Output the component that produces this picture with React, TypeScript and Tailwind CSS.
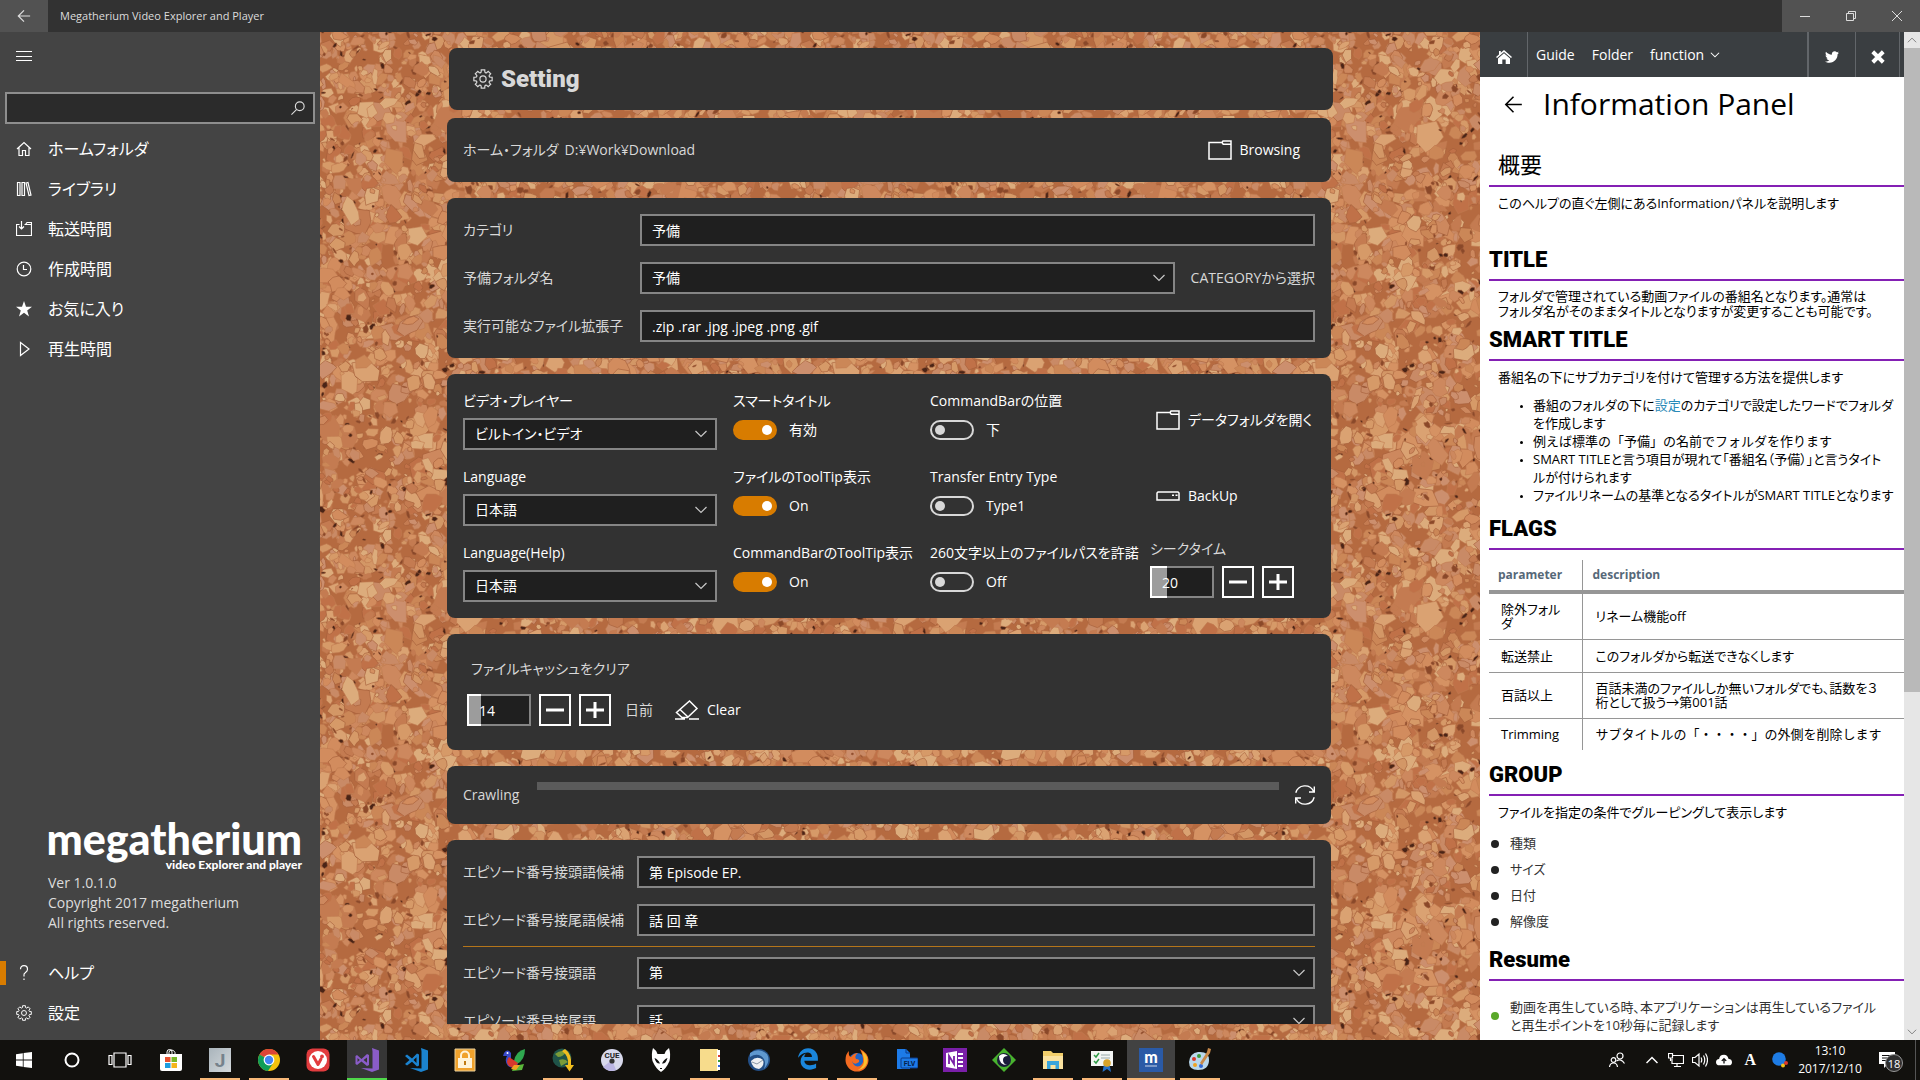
import React from "react";
import { FaTwitter, FaEdgeLegacy } from "react-icons/fa";

/* ---------- cork board ---------- */

const TILE = 480;

function makeCork() {
  let seed = 20171210;
  const rnd = () => {
    seed = (seed * 1664525 + 1013904223) % 4294967296;
    return seed / 4294967296;
  };
  const tones = ["#d39766", "#cb8757", "#daa272", "#c47b51", "#d28c5e", "#dcac7c", "#cd885e", "#c07148", "#d69a68", "#cc8f6e", "#d59263", "#c98a66"];
  const chips: { d: string; fill: string; edge: string }[] = [];
  const add = (x: number, y: number, r: number, fill: string, edge: string, flat = 0.5) => {
    const n = 5 + Math.floor(rnd() * 4);
    const turn = rnd() * 6.28;
    const squash = flat + rnd() * (1 - flat);
    const pts: [number, number][] = [];
    for (let i = 0; i < n; i++) {
      const a = (i / n) * 6.283 + rnd() * 0.5;
      const k = r * (0.65 + rnd() * 0.5);
      const px = Math.cos(a) * k;
      const py = Math.sin(a) * k * squash;
      pts.push([px * Math.cos(turn) - py * Math.sin(turn), px * Math.sin(turn) + py * Math.cos(turn)]);
    }
    for (const ox of [-TILE, 0, TILE]) {
      for (const oy of [-TILE, 0, TILE]) {
        const cx = x + ox;
        const cy = y + oy;
        if (cx < -30 || cx > TILE + 30 || cy < -30 || cy > TILE + 30) continue;
        chips.push({ d: "M" + pts.map((p) => `${(cx + p[0]).toFixed(1)} ${(cy + p[1]).toFixed(1)}`).join("L") + "Z", fill, edge });
      }
    }
  };
  for (let i = 0; i < 4200; i++) {
    const big = rnd();
    const r = big > 0.96 ? 12 + rnd() * 5 : big > 0.6 ? 6 + rnd() * 5 : 2 + rnd() * 5;
    add(rnd() * TILE, rnd() * TILE, r, tones[Math.floor(rnd() * tones.length)], rnd() > 0.65 ? "#a35a35" : "#c0794d");
    if (i % 5 === 0) add(rnd() * TILE, rnd() * TILE, 1 + rnd() * 3.5, rnd() > 0.5 ? "#4a2416" : "#8a4829", "#9a5532", 0.2);
  }
  return chips;
}

const cork = makeCork();

function CorkBoard() {
  return (
    <svg className="absolute inset-0 h-full w-full" aria-hidden="true">
      <defs>
        <pattern id="cork" width={TILE} height={TILE} patternUnits="userSpaceOnUse">
          <rect width={TILE} height={TILE} fill="#b56a40" />
          {cork.map((c, i) => (
            <path key={i} d={c.d} fill={c.fill} stroke={c.edge} strokeWidth="0.6" />
          ))}
        </pattern>
      </defs>
      <rect width="100%" height="100%" fill="url(#cork)" />
    </svg>
  );
}

/* ---------- line icons ---------- */

type IconProps = { className?: string; children: React.ReactNode; box?: string; w?: number };

function Line({ className = "size-4", children, box = "0 0 16 16", w = 1 }: IconProps) {
  return (
    <svg viewBox={box} className={className} fill="none" stroke="currentColor" strokeWidth={w} aria-hidden="true">
      {children}
    </svg>
  );
}

const gearPath = (() => {
  let d = "";
  for (let i = 0; i < 8; i++) {
    const a = (i * Math.PI) / 4;
    const p = (r: number, t: number) => `${(10 + r * Math.cos(a + t)).toFixed(2)} ${(10 + r * Math.sin(a + t)).toFixed(2)}`;
    d += `${i ? "L" : "M"}${p(7.2, -0.26)}L${p(9.3, -0.19)}L${p(9.3, 0.19)}L${p(7.2, 0.26)}Q${p(6.3, 0.3927)} ${p(7.2, 0.52)}`;
  }
  return d + "Z";
})();

function Gear({ className = "size-5" }: { className?: string }) {
  return (
    <Line className={className} box="0 0 20 20" w={1.2}>
      <path d={gearPath} />
      <circle cx="10" cy="10" r="3.1" />
    </Line>
  );
}

function BackArrow({ className = "size-4", w = 1 }: { className?: string; w?: number }) {
  return (
    <Line className={className} w={w}>
      <path d="M15 8H1.5M8 1.5L1.5 8L8 14.5" />
    </Line>
  );
}

function Chevron({ className = "h-2 w-3", w = 1.2 }: { className?: string; w?: number }) {
  return (
    <Line className={className} box="0 0 12 8" w={w}>
      <path d="M.5 1L6 6.5L11.5 1" />
    </Line>
  );
}

function FolderIcon() {
  return (
    <Line className="h-5 w-6" box="0 0 24 20" w={1.5}>
      <path d="M1 2.5H14L15 1H23V19H1ZM14 2.5L15.2 4.2H23" />
    </Line>
  );
}

/* ---------- shared controls ---------- */

const field = "h-8 w-full min-w-0 rounded-none border-2 border-[#858585] bg-[#1f1f1f] px-2.5 text-sm text-white outline-none";

function TextBox({ id, value }: { id: string; value: string }) {
  return <input id={id} type="text" defaultValue={value} className={field} />;
}

function Select({ id, value }: { id: string; value: string }) {
  return (
    <div className="grid w-full min-w-0 items-center">
      <select id={id} defaultValue={value} className={`${field} col-start-1 row-start-1 appearance-none`}>
        <option>{value}</option>
      </select>
      <Chevron className="pointer-events-none col-start-1 row-start-1 mr-2.5 h-2 w-3 justify-self-end text-[#c8c8c8]" />
    </div>
  );
}

function Toggle({ id, label, text, on }: { id: string; label: string; text: string; on?: boolean }) {
  return (
    <div className="flex h-[60px] flex-col gap-2 whitespace-nowrap text-white">
      <label htmlFor={id} className="h-5 leading-[22px]">{label}</label>
      <div className="flex items-center gap-3 pt-0.5">
        <input
          id={id}
          type="checkbox"
          role="switch"
          defaultChecked={on}
          className="flex h-5 w-11 shrink-0 appearance-none items-center rounded-full border-2 border-[#d8d8d8] px-[3px] before:size-2.5 before:rounded-full before:bg-[#d8d8d8] checked:justify-end checked:border-[#d87c00] checked:bg-[#d87c00] checked:before:bg-white"
        />
        <span className="leading-5">{text}</span>
      </div>
    </div>
  );
}

function LabeledSelect({ id, label, value }: { id: string; label: string; value: string }) {
  return (
    <div className="flex flex-col gap-2 pr-4 text-white">
      <label htmlFor={id} className="h-5 leading-[22px]">{label}</label>
      <Select id={id} value={value} />
    </div>
  );
}

function Stepper({ id, value, fill }: { id: string; value: string; fill: string }) {
  const btn = "flex size-8 items-center justify-center border-2 border-white text-white";
  return (
    <div className="flex gap-2">
      <input id={id} type="text" defaultValue={value} className={`h-8 w-16 rounded-none border-2 border-transparent px-2.5 text-sm text-white outline-none ${fill}`} />
      <button type="button" aria-label="減らす" className={btn}>
        <Line className="size-5" box="0 0 20 20" w={3}><path d="M1 10H19" /></Line>
      </button>
      <button type="button" aria-label="増やす" className={btn}>
        <Line className="size-5" box="0 0 20 20" w={3}><path d="M1 10H19M10 2V18" /></Line>
      </button>
    </div>
  );
}

const card = "rounded-lg bg-[#323232] px-4";

/* ---------- sidebar ---------- */

const nav = [
  { text: "ホームフォルダ", icon: <Line w={1.2}><path d="M1 8L8 1.5L15 8M3 6.5V14.5H6.5V9.5H9.5V14.5H13V6.5" /></Line> },
  { text: "ライブラリ", icon: <Line w={1.2}><path d="M1.5 1.5H4V14.5H1.5ZM6 1.5H8.5V14.5H6ZM10 2L12 1.5L15 14L13 14.5Z" /></Line> },
  { text: "転送時間", icon: <Line w={1.2}><path d="M3.5 3.5H.5V14.5H15.5V1.5H11L9.5 3.5H8.5M10 3.5H15.5M5.5 0V8M3 5.5L5.5 8L8 5.5" /></Line> },
  { text: "作成時間", icon: <Line w={1.2}><circle cx="8" cy="8" r="6.8" /><path d="M7.5 4V8.5H11" /></Line> },
  { text: "お気に入り", icon: <svg viewBox="0 0 16 16" className="size-4" fill="currentColor"><path d="M8 0L10 5.8H16L11.2 9.4L13 15.5L8 11.8L3 15.5L4.8 9.4L0 5.8H6Z" /></svg> },
  { text: "再生時間", icon: <Line w={1.2}><path d="M4.5 1.5L13 8L4.5 14.5Z" /></Line> },
];

function NavItem({ icon, text, active }: { icon: React.ReactNode; text: string; active?: boolean }) {
  return (
    <button type="button" className="flex h-10 w-full items-center text-left text-base text-white">
      <span className={active ? "h-6 w-1.5 bg-[#d87c00]" : "h-6 w-1.5"} />
      <span className="flex w-[42px] items-center pl-2.5">{icon}</span>
      {text}
    </button>
  );
}

function Sidebar() {
  return (
    <nav className="flex w-80 shrink-0 flex-col bg-[#444] pb-[7px]">
      <button type="button" aria-label="メニュー" className="flex h-12 w-12 items-center justify-center text-white">
        <Line><path d="M0 3.5H16M0 8.5H16M0 12.5H16" /></Line>
      </button>
      <form className="mx-[5px] mt-3 mb-[5px] flex h-8 items-center border-2 border-[#8e8e8e] bg-[#2b2b2b] pr-2 text-[#ddd]">
        <input type="search" aria-label="検索" className="h-full min-w-0 flex-1 bg-transparent px-2 text-sm outline-none" />
        <button type="button" aria-label="検索"><Line className="size-3.5" w={1.3}><circle cx="10" cy="6" r="5" /><path d="M6.500 9.500L.5 15.500" /></Line></button>
      </form>
      {nav.map((n) => <NavItem key={n.text} {...n} />)}
      <div className="mt-auto mb-5 pl-12 text-sm leading-5 text-[#ddd]">
        <div className="flex w-[254px] flex-col items-end font-['Lato'] font-black whitespace-nowrap text-white">
          <div className="text-[43px] leading-9">megatherium</div>
          <div className="text-xs leading-4">video Explorer and player</div>
        </div>
        <p>Ver 1.0.1.0</p>
        <p>Copyright 2017 megatherium</p>
        <p>All rights reserved.</p>
      </div>
      <NavItem active text="ヘルプ" icon={<Line w={1.2}><path d="M4.500 4.200Q4.500 .7 8 .7T11.500 4.200Q11.500 6 9.500 7.500T8 10V11.500M8 13.500V15" /></Line>} />
      <NavItem text="設定" icon={<Gear className="size-4" />} />
    </nav>
  );
}

/* ---------- settings ---------- */

function Settings() {
  return (
    <main className="relative flex min-w-0 flex-1 flex-col overflow-hidden pt-4 pb-4 text-sm text-[#d8d8d8]">
      <CorkBoard />
      <div className="relative pr-[18px]">
        <header className="mx-auto flex h-[62px] w-[884px] max-w-full items-center gap-2 rounded-lg bg-[#323232] pl-6">
          <Gear />
          <h1 className="font-['Roboto'] text-2xl leading-8 font-black">Setting</h1>
        </header>
      </div>
      <div className="relative mt-2 min-h-0 flex-1 overflow-hidden pr-[22px]">
        <div className="mx-auto flex w-[884px] max-w-full flex-col gap-4">
          <section className={`${card} flex h-16 items-center gap-1.5`}>
            <span>ホーム・フォルダ</span>
            <span>D:¥Work¥Download</span>
            <button type="button" className="mr-[15px] ml-auto flex items-center gap-2 text-white"><FolderIcon />Browsing</button>
          </section>

          <section className={`${card} grid grid-cols-[177px_1fr_auto] items-center gap-y-4 py-4`}>
            <label htmlFor="category">カテゴリ</label>
            <div className="col-span-2"><TextBox id="category" value="予備" /></div>
            <label htmlFor="spare">予備フォルダ名</label>
            <Select id="spare" value="予備" />
            <span className="pl-4">CATEGORYから選択</span>
            <label htmlFor="ext" className="whitespace-nowrap">実行可能なファイル拡張子</label>
            <div className="col-span-2"><TextBox id="ext" value=".zip .rar .jpg .jpeg .png .gif" /></div>
          </section>

          <section className={`${card} grid grid-cols-[270px_197px_220px_1fr] gap-y-4 py-4`}>
            <LabeledSelect id="player" label="ビデオ・プレイヤー" value="ビルトイン・ビデオ" />
            <Toggle id="smart" label="スマートタイトル" text="有効" on />
            <Toggle id="bar" label="CommandBarの位置" text="下" />
            <button type="button" className="flex items-center gap-2 pl-1.5 whitespace-nowrap text-white"><FolderIcon />データフォルダを開く</button>

            <LabeledSelect id="lang" label="Language" value="日本語" />
            <Toggle id="filetip" label="ファイルのToolTip表示" text="On" on />
            <Toggle id="entry" label="Transfer Entry Type" text="Type1" />
            <button type="button" className="flex items-center gap-2 pl-1.5 text-white">
              <Line className="h-2.5 w-6" box="0 0 24 10" w={1.5}><path d="M2 1H22L23 2V9H1V2ZM16 4.200H18M19.500 4.200H21.500" /></Line>
              BackUp
            </button>

            <LabeledSelect id="helplang" label="Language(Help)" value="日本語" />
            <Toggle id="bartip" label="CommandBarのToolTip表示" text="On" on />
            <Toggle id="longpath" label="260文字以上のファイルパスを許諾" text="Off" />
            <div className="flex flex-col gap-2">
              <label htmlFor="seek" className="h-4 leading-[14px]">シークタイム</label>
              <Stepper id="seek" value="20" fill="[background:linear-gradient(to_right,#9c9c9c_15px,#1f1f1f_15px)_padding-box,linear-gradient(to_right,#fff_17px,#858585_17px)_border-box]" />
            </div>
          </section>

          <section className={`${card} flex flex-col gap-4 py-6`}>
            <label htmlFor="days" className="h-5 pl-2 leading-[22px]">ファイルキャッシュをクリア</label>
            <div className="flex items-center pl-1">
              <Stepper id="days" value="14" fill="[background:linear-gradient(to_right,#9c9c9c_12px,#1f1f1f_12px)_padding-box,linear-gradient(to_right,#fff_14px,#858585_14px)_border-box]" />
              <span className="pl-3.5">日前</span>
              <button type="button" className="ml-[22px] flex items-center gap-2 text-white">
                <Line className="h-5 w-6" box="0 0 24 20" w={1.5}><path d="M14.500 1L22 8.500L12.500 17.500H7L1.500 12.500ZM5 9.500L13 17M0 19H10M14 19H24" /></Line>
                Clear
              </button>
            </div>
          </section>

          <section className={`${card} flex h-[58px] items-center gap-4`}>
            <span className="w-[58px]">Crawling</span>
            <div role="progressbar" aria-label="Crawling" className="mt-4 h-2 flex-1 self-start bg-[#5b5b5b]" />
            <button type="button" aria-label="更新" className="text-white">
              <Line className="size-5" box="0 0 20 20" w={1.4}><path d="M.8 7.800A9.500 9.500 0 0 1 18.500 6.200M19.300 1.500V7H14M19.200 12.200A9.500 9.500 0 0 1 1.500 13.800M.7 18.500V13H6" /></Line>
            </button>
          </section>

          <section className={`${card} flex shrink-0 flex-col py-4`}>
            <div className="grid grid-cols-[174px_1fr] items-center gap-y-4">
              <label htmlFor="pre-c" className="whitespace-nowrap">エピソード番号接頭語候補</label>
              <TextBox id="pre-c" value="第 Episode EP." />
              <label htmlFor="suf-c" className="whitespace-nowrap">エピソード番号接尾語候補</label>
              <TextBox id="suf-c" value="話 回 章" />
            </div>
            <hr className="my-2.5 border-[#b5751a]" />
            <div className="grid grid-cols-[174px_1fr] items-center gap-y-4">
              <label htmlFor="pre">エピソード番号接頭語</label>
              <Select id="pre" value="第" />
              <label htmlFor="suf">エピソード番号接尾語</label>
              <Select id="suf" value="話" />
            </div>
          </section>
        </div>
      </div>
    </main>
  );
}

/* ---------- help panel ---------- */

function Heading({ children }: { children: string }) {
  return (
    <h2 className="ml-[9px] h-[42px] border-b-2 border-[#8420b4] font-['Roboto'] text-[22px] leading-[42px] font-black text-black">{children}</h2>
  );
}

const flags: [string, React.ReactNode, string][] = [
  ["除外フォルダ", "リネーム機能off", "h-[47px]"],
  ["転送禁止", "このフォルダから転送できなくします", "h-[33px]"],
  ["百話以上", <>百話未満のファイルしか無いフォルダでも、話数を３<br />桁として扱う→第001話</>, "h-[46px]"],
  ["Trimming", <span className="[font-feature-settings:normal]">サブタイトルの「・・・・」の外側を削除します</span>, "h-8"],
];

function HelpPanel() {
  const cell = "border-[#969696]";
  return (
    <aside className="flex w-[440px] shrink-0 bg-white text-[13px] text-black">
      <div className="min-w-0 flex-1 overflow-hidden whitespace-nowrap">
        <div className="flex h-[45px] items-stretch bg-[#3a3e41] text-sm text-white">
          <a href="#home" aria-label="ホーム" className="flex w-12 items-center justify-center border-r border-[#62666a]">
            <svg viewBox="0 0 16 14" className="mt-1 h-3.5 w-4" fill="currentColor"><path d="M8 0L16 7L15 8L8 2L1 8L0 7L3 4.400V1H4.800V2.800Z" /><path d="M8 3.300L14 8.500V14H9.700V9.500H6.300V14H2V8.500Z" /></svg>
          </a>
          <a href="#guide" className="flex items-center pl-2">Guide</a>
          <a href="#folder" className="flex items-center pl-[17px]">Folder</a>
          <button type="button" className="flex items-center gap-1.5 pl-[17px]">function<Chevron className="h-1.5 w-2.5" w={1.4} /></button>
          <a href="#twitter" aria-label="Twitter" className="ml-auto flex w-[49px] items-center justify-center border-r border-l-2 border-[#62666a] pt-1"><FaTwitter className="size-3.5" /></a>
          <button type="button" aria-label="閉じる" className="mr-1 flex w-11 items-center justify-center border-r border-[#62666a] pt-1">
            <Line className="size-3.5" w={4.5}><path d="M2 2L14 14M14 2L2 14" /></Line>
          </button>
        </div>
        <div className="flex h-[66px] items-center pb-3 pl-6">
          <a href="#back" aria-label="戻る"><BackArrow className="size-[19px]" w={1.3} /></a>
          <h1 className="pl-5 text-[30px] leading-10">Information Panel</h1>
        </div>
        <h2 className="ml-[9px] h-11 border-b-2 border-[#8420b4] pl-[9px] text-[22px] leading-[42px]">概要</h2>
        <p className="h-[52px] pl-[18px] leading-8">このヘルプの直ぐ左側にあるInformationパネルを説明します</p>
        <Heading>TITLE</Heading>
        <p className="h-[38px] pt-2 pl-[18px] leading-[15px]">フォルダで管理されている動画ファイルの番組名となります。通常は<br />フォルダ名がそのままタイトルとなりますが変更することも可能です。</p>
        <Heading>SMART TITLE</Heading>
        <p className="h-[35px] pl-[18px] leading-8">番組名の下にサブカテゴリを付けて管理する方法を提供します</p>
        <ul className="h-28 list-disc pl-[53px] leading-[18px] marker:text-[8px]">
          <li>番組のフォルダの下に<a href="#setting" className="text-[#2a8ab8]">設定</a>のカテゴリで設定したワードでフォルダ<br />を作成します</li>
          <li className="[font-feature-settings:normal]">例えば標準の「予備」の名前でフォルダを作ります</li>
          <li>SMART TITLEと言う項目が現れて「番組名（予備）」と言うタイト<br />ルが付けられます</li>
          <li>ファイルリネームの基準となるタイトルがSMART TITLEとなります</li>
        </ul>
        <Heading>FLAGS</Heading>
        <table className="mt-2.5 ml-[9px] w-[415px] table-fixed border-collapse text-left leading-[14px] whitespace-normal">
          <thead>
            <tr className="h-8 border-b-4 border-[#969696] text-xs text-[#566878]">
              <th className={`w-[93px] border-r pl-[9px] ${cell}`}>parameter</th>
              <th className="pl-2.5">description</th>
            </tr>
          </thead>
          <tbody>
            {flags.map(([a, b, h]) => (
              <tr key={a} className={`border-b border-[#969696] last:border-b-0 ${h}`}>
                <td className={`border-r pr-3 pl-3 ${cell}`}>{a}</td>
                <td className="pl-[13px] whitespace-nowrap">{b}</td>
              </tr>
            ))}
          </tbody>
        </table>
        <div className="pt-1"><Heading>GROUP</Heading></div>
        <p className="h-[35px] pl-[18px] leading-8">ファイルを指定の条件でグルーピングして表示します</p>
        <ul className="mb-1 text-[#333]">
          {["種類", "サイズ", "日付", "解像度"].map((t) => (
            <li key={t} className="flex h-[26px] items-center gap-[11px] pl-[11px]"><span className="size-2 rounded-full bg-[#222]" />{t}</li>
          ))}
        </ul>
        <Heading>Resume</Heading>
        <ul className="pt-[17px] text-[#333]">
          <li className="flex items-center gap-[11px] pl-[11px] leading-[18px]">
            <span className="size-2 rounded-full bg-[#5aa82a]" />
            <span>動画を再生している時、本アプリケーションは再生しているファイル<br />と再生ポイントを10秒毎に記録します</span>
          </li>
        </ul>
      </div>
      <div className="flex w-4 flex-col bg-[#e6e6e6] text-[#777]">
        <button type="button" aria-label="上へ" className="flex h-4 items-center justify-center"><Chevron className="h-1.5 w-2.5 rotate-180" /></button>
        <div className="flex-1"><div className="h-[66%] bg-[#b9b9b9]" /></div>
        <button type="button" aria-label="下へ" className="flex h-4 items-center justify-center"><Chevron className="h-1.5 w-2.5" /></button>
      </div>
    </aside>
  );
}

/* ---------- taskbar ---------- */

function Art({ children }: { children: React.ReactNode }) {
  return <svg viewBox="0 0 24 24" className="size-6" aria-hidden="true">{children}</svg>;
}

type App = { name: string; art: React.ReactNode; open?: boolean; active?: boolean; green?: boolean };

const apps: App[] = [
  { name: "Store", art: <Art><path d="M8 6V4Q8 1.5 10.5 1.5T13 4V6M10 6V4.5Q10 2 12.5 2T16 4.5V6" fill="none" stroke="#fff" /><path d="M1 6H23V21Q23 23 21 23H3Q1 23 1 21Z" fill="#fff" /><path d="M6 9H11.5V14H6Z" fill="#e8502f" /><path d="M12.5 9H18V14H12.5Z" fill="#78b828" /><path d="M6 15H11.5V20H6Z" fill="#1c9de0" /><path d="M12.5 15H18V20H12.5Z" fill="#f5b51c" /></Art> },
  { name: "J", open: true, art: <Art><defs><linearGradient id="jg" x1="0" y1="0" x2="1" y2="1"><stop stopColor="#a9b4bb" /><stop offset="1" stopColor="#d4d9dc" /></linearGradient></defs><path d="M1 0H23V24H1Z" fill="url(#jg)" /><text x="12" y="19" textAnchor="middle" fontSize="19" fontWeight="700" fontFamily="Roboto" fill="#76828b">J</text></Art> },
  { name: "Chrome", open: true, art: <Art><circle cx="12" cy="12" r="11" fill="#f4c20d" /><path d="M12 12L2.5 6.5A11 11 0 0 1 21.6 6.6H12Z" fill="#db4437" /><path d="M12 12L2.5 6.5A11 11 0 0 0 11 23L16.5 14.5Z" fill="#0f9d58" /><circle cx="12" cy="12" r="5.4" fill="#fff" /><circle cx="12" cy="12" r="4.2" fill="#4285f4" /></Art> },
  { name: "Vivaldi", art: <Art><rect x=".5" y=".5" width="23" height="23" rx="6" fill="#e23c3e" /><circle cx="12" cy="12" r="9" fill="#fff" /><path d="M7.5 8.5L12 16.5L15 11" fill="none" stroke="#e23c3e" strokeWidth="3" strokeLinecap="round" strokeLinejoin="round" /><circle cx="16" cy="8.4" r="1.9" fill="#e23c3e" /></Art> },
  { name: "Visual Studio", green: true, active: true, art: <Art><path d="M17 0L24 2.5V21.5L17 24L6 20L17.500 20.500V3.500L17 0Z" fill="#8a5cc8" /><path d="M2 7L6.5 11L12 6L14 7V17L12 18L6.5 13.5L2 17L.5 16V8ZM2.5 10V14L4.8 12ZM12 9.5L8.5 12L12 14.7Z" fill="#8a5cc8" fillRule="evenodd" /></Art> },
  { name: "Visual Studio Code", art: <Art><path d="M17 0L24 2.5V21.5L17 24L6 20L17.500 20.500V3.500L17 0Z" fill="#1b83cf" /><path d="M1 8L3 6.500L8 10.500L13 5.500L15 6.500V17.500L13 18.500L8 13.800L3 17.500L1 16L5.500 12ZM12.500 9.200L9.500 12L12.500 15Z" fill="#1b83cf" fillRule="evenodd" /></Art> },
  { name: "Lock", art: <Art><path d="M2 1H22V23H2Z" fill="#f0a22c" stroke="#e8cf9a" /><path d="M5 10H19V20H5Z" fill="#fff3d8" /><path d="M8 11V7.5A4 4 0 0 1 16 7.5V11" fill="none" stroke="#fff3d8" strokeWidth="2" /><path d="M11 13H13V17H11Z" fill="#c07a14" /></Art> },
  { name: "Bird", art: <Art><path d="M12 13Q14 3 23 1Q23 12 15 16Z" fill="#2fa84f" /><path d="M2 5Q5 0 9 5V11L16 16Q12 22 6 18Q2 13 5 8L1 8Z" fill="#3949c8" /><path d="M7 9L16 15Q12 22 7 18Q3 14 7 9Z" fill="#d8382e" /><path d="M12 18L22 16L20 22L10 23Z" fill="#5ab83a" /><path d="M12 17L18 17L14 22L9 21Z" fill="#f0a322" /><circle cx="5.5" cy="5" r="1" fill="#fff" /></Art> },
  { name: "Globe", open: true, art: <Art><circle cx="11" cy="10" r="9.5" fill="#1f5348" /><path d="M4 6Q10 1 15 4Q12 9 7 9ZM8 12Q14 10 17 14L10 18Z" fill="#7a9b38" /><path d="M14 1Q21 6 20 17H23L18.5 23.5L14 17H17Q18 8 11 3Z" fill="#f0bd1e" /></Art> },
  { name: "CUE", art: <Art><circle cx="12" cy="12" r="11" fill="#d8d9ec" /><path d="M12 12L3 19A11 11 0 0 0 16 22Z" fill="#bcb6e4" /><circle cx="12" cy="13" r="2.6" fill="#333" /><text x="12" y="10" textAnchor="middle" fontSize="8" fontWeight="700" fontFamily="Roboto" fill="#222">CUE</text></Art> },
  { name: "foobar2000", art: <Art><path d="M4 0Q7 2 8.500 6H15.500Q17 2 20 0Q22 6 20.500 13Q17 21 12 24Q7 21 3.500 13Q2 6 4 0Z" fill="#fff" /><path d="M5.500 10Q9 11 11 15.500Q7 16 5.500 10ZM18.500 10Q15 11 13 15.500Q17 16 18.500 10Z" fill="#111" /><path d="M11 20H13V21H11Z" fill="#111" /></Art> },
  { name: "Notes", open: true, art: <Art><path d="M2 1H20V23H2Z" fill="#f7dc8c" /><path d="M19 2H22V22H19Z" fill="#fff" /><path d="M20 7H22V9H20Z" fill="#d8382e" /><path d="M20 12H22V14H20Z" fill="#3a9b3a" /><path d="M20 17H22V19H20Z" fill="#3068d8" /></Art> },
  { name: "Thunderbird", art: <Art><circle cx="12" cy="12" r="11" fill="#234f86" /><path d="M3 5Q12 -1 20 6Q24 13 17 21Q20 12 14 8Q9 5 3 9Z" fill="#5f98cf" /><path d="M4 13Q10 7 16 12Q18 18 12 21Q5 20 4 13Z" fill="#eef0f2" /><path d="M5 14L10 16L16 12" fill="none" stroke="#8a98a6" /></Art> },
  { name: "Edge", open: true, art: <FaEdgeLegacy className="size-[22px] text-[#1a86dc]" /> },
  { name: "Firefox", open: true, art: <Art><circle cx="12" cy="13" r="8" fill="#1d65c8" /><path d="M4 3Q3 8 6 9Q9 5 13 5Q9 8 11 11Q15 11 14 14Q9 18 7 13Q9 20 15 18Q20 15 17 6L15 1Q23 5 23.500 12A11.500 11.500 0 0 1 .5 12Q.5 6 4 3Z" fill="#f36b21" /><path d="M17 3Q24 8 22 15Q20 21 13 22Q20 18 19 11Z" fill="#fbc02d" /></Art> },
  { name: "FLV", art: <Art><path d="M3 1H12L16 5V21H3Z" fill="#1d7be8" /><path d="M12 1V5H16" fill="none" stroke="#0c3c88" /><rect x="7" y="10" width="17" height="10" rx="1" fill="#1d7be8" stroke="#0c3c88" /><text x="15.500" y="18" textAnchor="middle" fontSize="7" fontWeight="700" fontFamily="Roboto" fill="#071f4a">FLV</text></Art> },
  { name: "OneNote", art: <Art><path d="M0 0H24V24H0Z" fill="#7a1fa8" /><path d="M3 5L14 3V21L3 19Z" fill="#fff" /><path d="M15 5H20V7H15ZM15 9H20V11H15ZM15 13H20V15H15ZM15 17H20V19H15Z" fill="#fff" /><path d="M6 16V8L11 16V8" fill="none" stroke="#7a1fa8" strokeWidth="1.800" /></Art> },
  { name: "Browser", art: <Art><path d="M12 0L24 12L12 24L0 12Z" fill="#49b32e" /><circle cx="12" cy="12" r="7" fill="#1a1d3a" /><path d="M7 8Q11 4 16 8Q11 8 11 12T15 17Q7 17 7 8Z" fill="#fff" /></Art> },
  { name: "Explorer", open: true, art: <Art><path d="M2 3H10L12 5H22V21H2Z" fill="#f2cf6b" /><path d="M2 8H22V21H2Z" fill="#fbe3a0" /><path d="M6 21V13H18V21H14.500V17H9.500V21Z" fill="#3aa5dc" /></Art> },
  { name: "Certificate", open: true, art: <Art><path d="M1 3H23V18H1Z" fill="#f4f6f4" /><path d="M4 7L6 9L9 5M4 13L6 15L9 11" fill="none" stroke="#2f9b46" strokeWidth="1.500" /><path d="M11 7H20M11 10H20" stroke="#9aa" /><path d="M14 16L12.500 24L17 21L21 24L19.500 16Z" fill="#2470c8" /><circle cx="17" cy="15" r="3.800" fill="#d8a32a" /></Art> },
  { name: "Megatherium", open: true, active: true, art: <Art><path d="M0 0H24V24H0Z" fill="#2a5aa6" /><text x="12" y="15" textAnchor="middle" fontSize="16" fontWeight="900" fontFamily="Lato" fill="#fff">m</text><path d="M6 18H18" stroke="#c8d4ea" /></Art> },
  { name: "Paint", open: true, art: <Art><path d="M10 4Q21 3 21 12Q21 22 10 22Q1 22 1 14Q2 5 10 4Z" fill="#b9d8ec" /><circle cx="6" cy="11" r="2" fill="#d8382e" /><circle cx="11" cy="8" r="2" fill="#3a9b3a" /><circle cx="7" cy="17" r="2" fill="#f0a322" /><circle cx="13" cy="18" r="2" fill="#3068d8" /><path d="M12 15L19 4L20 0L23 1L22 5L14 17Z" fill="#c98a4a" /></Art> },
];

function Taskbar() {
  const sys = "flex w-12 items-center justify-center";
  return (
    <footer className="flex h-10 shrink-0 bg-[#12110e] text-white">
      <button type="button" aria-label="スタート" className={sys}><svg viewBox="0 0 16 16" className="size-4" fill="#fff"><path d="M0 2.200L6.800 1.200V7.600H0ZM7.600 1.100L16 0V7.600H7.600ZM0 8.400H6.800V14.800L0 13.800ZM7.600 8.400H16V16L7.600 14.900Z" /></svg></button>
      <button type="button" aria-label="Cortana" className={sys}><Line w={2}><circle cx="8" cy="8" r="6.500" /></Line></button>
      <button type="button" aria-label="タスクビュー" className={`${sys} mr-[3px]`}><Line className="h-4 w-6" box="0 0 24 16" w={1.200}><path d="M6 1H18V15H6ZM4 3.500H1V12.500H4ZM20 3.500H23V12.500H20Z" /></Line></button>
      {apps.map((a) => (
        <button
          key={a.name}
          type="button"
          aria-label={a.name}
          className={`mr-px flex w-12 flex-col items-center pt-2 ${a.active ? (a.green ? "bg-[linear-gradient(to_right,transparent_4px,#363636_4px,#363636_44px,transparent_44px)]" : "bg-[#424242]") : ""}`}
        >
          <span className="flex h-[30px] items-start">{a.art}</span>
          <span className={`h-0.5 ${a.active && !a.green ? "w-12" : "w-10"} ${a.green ? "bg-[#4fd84a]" : a.open ? "bg-[#f8b878]" : ""}`} />
        </button>
      ))}
      <div className="ml-auto flex items-center">
        <Line className="mr-[21px] size-4" w={1.200}><circle cx="11" cy="4" r="3" /><circle cx="4.500" cy="8" r="2.300" /><path d="M.5 15Q1 11 4.500 11T8.500 15M7.500 9Q12 6 15.500 11.500" /></Line>
        <Chevron className="mr-2.5 h-2 w-3 rotate-180" w={1.5} />
        <Line className="mr-2 size-4" w={1.200}><path d="M4 3.500H15.500V11.500H4V7M9 11.500V14.500M6 14.500H13M.5 1.500H4.500V6H.5ZM2.500 6V9" /></Line>
        <Line className="mr-2 size-4" w={1.200}><path d="M.5 5.500H3L7 2V14L3 10.500H.5ZM9 5.500Q10.500 8 9 10.500M11.500 3.500Q14 8 11.500 12.500M13.500 1.500Q17.500 8 13.500 14.500" /></Line>
        <svg viewBox="0 0 18 14" className="mr-3 h-3.5 w-4"><path d="M4 13Q0 13 0 9.500Q0 6.500 3.500 6Q4 1 9 1Q13 1 14 5.500Q18 6 18 9.500Q18 13 14.500 13Z" fill="#fff" /><path d="M9 11V5.500M6.500 8L9 5.500L11.500 8" stroke="#111" strokeWidth="1.500" fill="none" /></svg>
        <span className="mr-4 font-['Liberation_Serif'] text-base font-bold">A</span>
        <svg viewBox="0 0 16 16" className="mr-[9px] size-4"><circle cx="7" cy="7" r="6.800" fill="#1e7ce4" /><circle cx="14" cy="11" r="2" fill="#e03a2a" /><circle cx="11" cy="13.500" r="2" fill="#f2c21e" /></svg>
        <time className="mr-4 w-[66px] text-center text-xs leading-[18px]">13:10<br />2017/12/10</time>
        <button type="button" aria-label="通知" className="relative mr-3 size-6">
          <svg viewBox="0 0 16 16" className="size-4"><path d="M0 0H16V12H9L5 16V12H0Z" fill="#fff" /><path d="M3 3.500H13M3 6H13M3 8.500H10" stroke="#111" /></svg>
          <span className="absolute top-1.5 left-1.5 flex size-[18px] items-center justify-center rounded-full border border-[#999] bg-[#2e2e2e] text-[11px] leading-none">18</span>
        </button>
        <div className="mr-1 h-10 w-px bg-[#555]" />
      </div>
    </footer>
  );
}

/* ---------- window ---------- */

export default function App() {
  const ctl = "flex w-[46px] items-center justify-center";
  return (
    <div lang="ja" className="flex h-screen flex-col overflow-hidden bg-[#323232] font-['Open_Sans','Noto_Sans_CJK_JP',sans-serif] [font-feature-settings:'palt']">
      <div className="flex h-8 shrink-0 items-stretch text-[#dcdcdc]">
        <button type="button" aria-label="戻る" className="flex w-12 items-center justify-center bg-[#525252]"><BackArrow className="size-3.5" w={1.4} /></button>
        <span className="flex-1 pl-3 text-[11px] leading-8">Megatherium Video Explorer and Player</span>
        <div className="flex bg-[#525252]">
          <button type="button" aria-label="最小化" className={ctl}><Line className="size-2.5" box="0 0 10 10"><path d="M0 5.500H10" /></Line></button>
          <button type="button" aria-label="元に戻す" className={ctl}><Line className="size-2.5" box="0 0 10 10"><path d="M.5 2.500H7.500V9.500H.5ZM2.500 2.500V.5H9.500V7.500H7.500" /></Line></button>
          <button type="button" aria-label="閉じる" className={ctl}><Line className="size-2.5" box="0 0 10 10"><path d="M0 0L10 10M10 0L0 10" /></Line></button>
        </div>
      </div>
      <div className="flex min-h-0 flex-1">
        <Sidebar />
        <Settings />
        <HelpPanel />
      </div>
      <Taskbar />
    </div>
  );
}
